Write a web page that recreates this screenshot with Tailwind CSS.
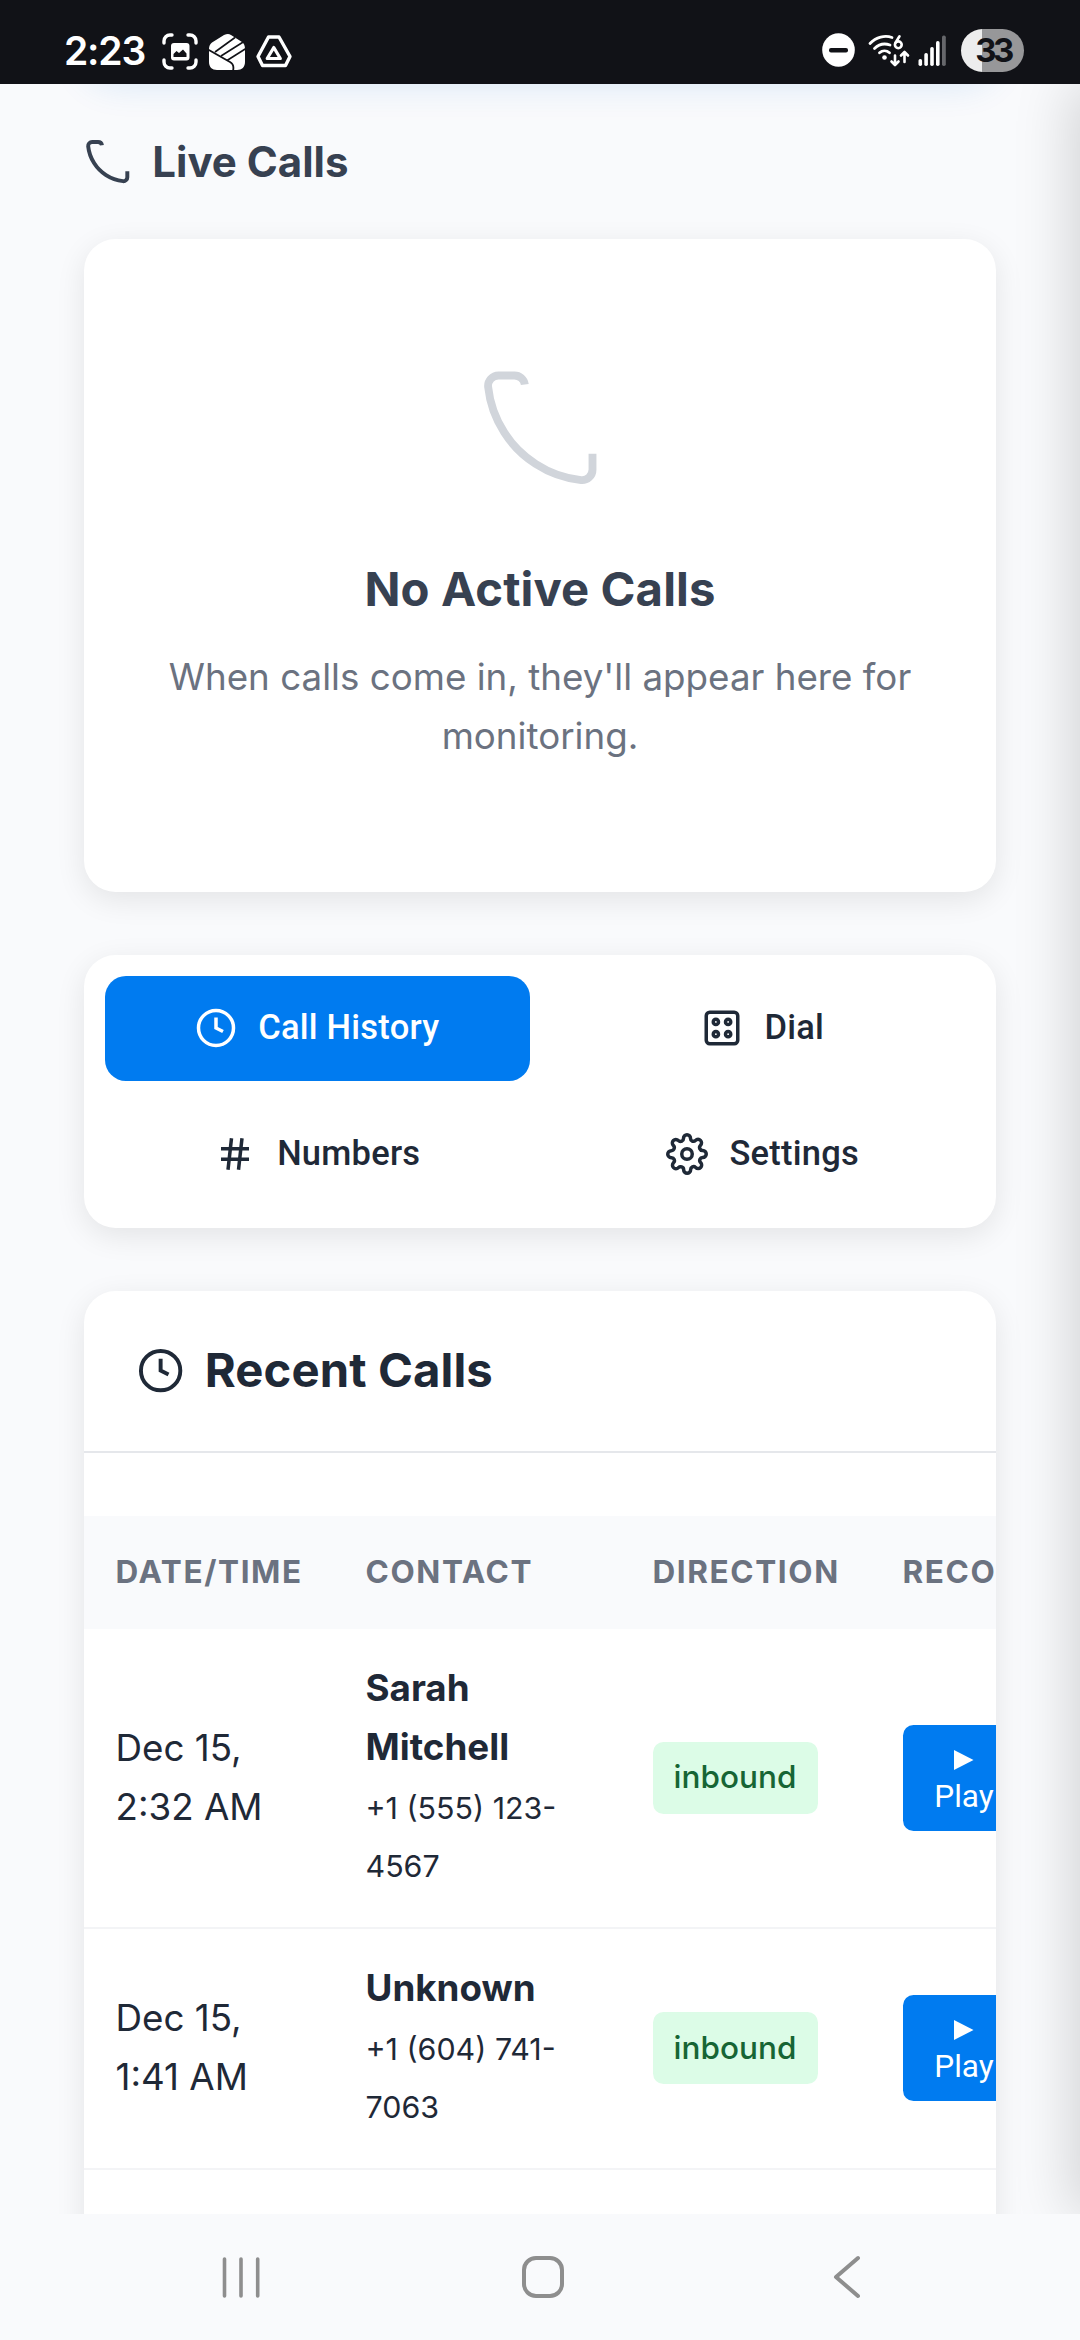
<!DOCTYPE html>
<html lang="en">
<head>
<meta charset="utf-8">
<meta name="viewport" content="width=device-width">
<title>Live Calls</title>
<script src="https://cdn.jsdelivr.net/npm/@tailwindcss/browser@4"></script>
</head>
<body class="bg-[#f9fafc] font-['Inter',sans-serif] text-[#1f2937] overflow-hidden">
<div class="flex h-[2340px] w-[1080px] flex-col overflow-hidden">

  <!-- Status bar -->
  <header class="relative z-10 flex h-[84px] shrink-0 items-center justify-between bg-[#111217] pt-[16px] pr-[56px] pl-[64px] text-white">
    <div class="flex items-center">
      <span class="w-[98px] text-[39px] leading-none font-semibold tracking-[-1.2px]">2:23</span>
      <svg class="mt-[3px] h-[37px] w-[36px]" viewBox="0 0 36 37" fill="none">
        <path d="M2 10V8a6 6 0 0 1 6-6h2M26 2h2a6 6 0 0 1 6 6v2M34 27v2a6 6 0 0 1-6 6h-2M10 35H8a6 6 0 0 1-6-6v-2" stroke="#fff" stroke-width="3.4" stroke-linecap="round"/>
        <rect x="9" y="10" width="18.5" height="17.5" rx="3" fill="#fff"/>
        <path d="M11.5 24v-3l3-3 2.500 2 4-3.500 3.500 4V24z" fill="#111217"/>
      </svg>
      <svg class="mt-[3px] ml-[10px] h-[38px] w-[38px]" viewBox="0 0 38 38">
        <path d="M1 16c0-3 1-5 3-6.500L16 2c3-1.500 5-1.500 7 0l11 7c2 1.500 3 3.500 3 7v13c0 5-3 8-8 8H9c-5 0-8-3-8-8z" fill="#fff"/>
        <path d="M0 16.500l22 12.500c4 2.200 4 5 3 9" fill="none" stroke="#111217" stroke-width="1.800"/>
        <path d="M38 15.500L19 27.500M7 19L27 4.500M13 23L36 8.500" fill="none" stroke="#111217" stroke-width="1.600"/>
      </svg>
      <svg class="mt-[2px] ml-[10px] h-[33px] w-[36px]" viewBox="0 0 36 33" fill="none" stroke="#fff" stroke-linejoin="round">
        <path d="M12.500 2h10.500L34 21.500 29.500 30.500h-23L2 21.500z" stroke-width="3.400"/>
        <path d="M17.800 12.500l6.500 11H11.200z" stroke-width="3.200"/>
      </svg>
    </div>
    <div class="flex items-center">
      <svg class="h-[34px] w-[33px]" viewBox="0 0 33 34"><ellipse cx="16.500" cy="17" rx="16.300" ry="16.700" fill="#fff"/><rect x="7" y="15" width="19" height="4.400" rx="2" fill="#111217"/></svg>
      <svg class="ml-[13px] h-[33px] w-[42px]" viewBox="0 0 42 33" fill="none" stroke="#fff" stroke-linecap="round">
        <path d="M2 9.500C8 3 17 1 24 3.500M6.500 14.500c4.500-4.500 10-5.500 15.500-3.500M11.500 18.800c3-2.600 7-2.600 10 0" stroke-width="2.800"/>
        <circle cx="16.500" cy="23.500" r="2.300" fill="#fff" stroke="none"/>
        <path d="M31.500 2.300l-4 6.500" stroke-width="2.600"/><circle cx="30.300" cy="10.800" r="3.400" stroke-width="2.600"/>
        <path d="M27 21.500v9M23.500 27.500l3.500 3.500 3.500-3.500M36.500 28v-9.500M33 21.500l3.500-3.500 3.500 3.500" stroke-width="2.600" stroke-linejoin="round"/>
      </svg>
      <svg class="ml-[8px] h-[31px] w-[29px]" viewBox="0 0 29 31" fill="#fff"><rect x="0.500" y="24" width="3.600" height="7" rx="1.700"/><rect x="6.300" y="18" width="3.600" height="13" rx="1.700"/><rect x="12.200" y="12" width="3.600" height="19" rx="1.700"/><rect x="18" y="6" width="3.600" height="25" rx="1.700"/><rect x="24" y="0.500" width="3.800" height="30.500" rx="1.700" fill="#66676b"/></svg>
      <div class="ml-[14px] flex h-[43px] w-[63px] items-center justify-center rounded-full bg-linear-to-r from-[#ededed] from-[33%] to-[#979799] to-[33%]">
        <span class="pl-[1px] text-[33px] leading-none font-bold tracking-[-3.5px] text-[#111217]">33</span>
      </div>
    </div>
  </header>

  <main class="relative flex h-[2130px] shrink-0 flex-col overflow-hidden px-[84px]">
    <!-- Shadow of the banner scrolled off above -->
    <div class="absolute bottom-full left-[84px] h-[100px] w-[912px] -translate-y-[8px] rounded-[31.5px] shadow-[0_8px_36px_rgba(0,110,210,0.14)]"></div>
    <!-- Shadow of the off-canvas drawer -->
    <div class="absolute top-0 left-full z-20 h-full w-[700px] shadow-[-10px_0_53px_rgba(0,0,0,0.15)]"></div>

    <h2 class="mt-[44px] flex h-[67px] shrink-0 items-center gap-[21px] text-[42px] font-bold text-[#374151]">
      <svg class="size-[47.25px]" viewBox="0 0 24 24" fill="none" stroke="currentColor" stroke-width="2"><path d="M22 16.920v3a2 2 0 0 1-2.180 2 19.790 19.790 0 0 1-8.630-3.070 19.500 19.500 0 0 1-6-6 19.790 19.790 0 0 1-3.070-8.670A2 2 0 0 1 4.110 2h3a2 2 0 0 1 2 1.720"/></svg>
      Live Calls
    </h2>

    <section class="mt-[43.5px] flex h-[653px] shrink-0 flex-col items-center rounded-[31.5px] bg-white px-[63px] pt-[126px] text-center shadow-[0_8px_30px_rgba(0,0,0,0.09)]">
      <svg class="size-[126px] text-[#d1d5db]" viewBox="0 0 24 24" fill="none" stroke="currentColor" stroke-width="1.500"><path d="M22 16.920v3a2 2 0 0 1-2.180 2 19.790 19.790 0 0 1-8.630-3.070 19.500 19.500 0 0 1-6-6 19.790 19.790 0 0 1-3.070-8.670A2 2 0 0 1 4.110 2h3a2 2 0 0 1 2 1.720"/></svg>
      <h3 class="mt-[60px] text-[47.25px] leading-[75.6px] font-bold tracking-[0.1px] text-[#374151]">No Active Calls</h3>
      <p class="mt-[22px] text-[36.75px] leading-[58.8px] text-[#6b7280]">When calls come in, they'll appear here for<br>monitoring.</p>
    </section>

    <nav class="mt-[63px] grid h-[273px] shrink-0 grid-cols-2 grid-rows-2 gap-[21px] rounded-[31.5px] bg-white p-[21px] font-['Roboto',sans-serif] text-[34.5px] font-medium tracking-[0.24px] shadow-[0_8px_30px_rgba(0,0,0,0.09)]">
      <a class="flex items-center justify-center gap-[21px] rounded-[21px] bg-[#007bf0] text-white">
        <svg class="size-[42px]" viewBox="0 0 24 24" fill="none" stroke="currentColor" stroke-width="2"><circle cx="12" cy="12" r="10"/><path d="M12 6v6l4 2"/></svg>
        Call History
      </a>
      <a class="flex items-center justify-center gap-[21px]">
        <svg class="size-[42px]" viewBox="0 0 24 24" fill="none" stroke="currentColor" stroke-width="2"><rect x="3" y="3" width="18" height="18" rx="2"/><circle cx="8.500" cy="8.500" r="1.500"/><circle cx="15.500" cy="8.500" r="1.500"/><circle cx="8.500" cy="15.500" r="1.500"/><circle cx="15.500" cy="15.500" r="1.500"/></svg>
        Dial
      </a>
      <a class="flex items-center justify-center gap-[21px]">
        <svg class="size-[42px]" viewBox="0 0 24 24" fill="none" stroke="currentColor" stroke-width="2"><path d="M4 9h16M4 15h16M10 3L8 21M16 3l-2 18"/></svg>
        Numbers
      </a>
      <a class="flex items-center justify-center gap-[21px]">
        <svg class="size-[42px]" viewBox="0 0 24 24" fill="none" stroke="currentColor" stroke-width="2"><circle cx="12" cy="12" r="3"/><path d="M19.400 15a1.650 1.650 0 0 0 .33 1.820l.06.06a2 2 0 0 1 0 2.830 2 2 0 0 1-2.830 0l-.06-.06a1.650 1.650 0 0 0-1.820-.33 1.650 1.650 0 0 0-1 1.510V21a2 2 0 0 1-2 2 2 2 0 0 1-2-2v-.09A1.650 1.650 0 0 0 9 19.400a1.650 1.650 0 0 0-1.820.33l-.06.06a2 2 0 0 1-2.830 0 2 2 0 0 1 0-2.830l.06-.06a1.650 1.650 0 0 0 .33-1.820 1.650 1.650 0 0 0-1.510-1H3a2 2 0 0 1-2-2 2 2 0 0 1 2-2h.09A1.650 1.650 0 0 0 4.600 9a1.650 1.650 0 0 0-.33-1.820l-.06-.06a2 2 0 0 1 0-2.830 2 2 0 0 1 2.830 0l.06.06a1.650 1.650 0 0 0 1.820.33H9a1.650 1.650 0 0 0 1-1.510V3a2 2 0 0 1 2-2 2 2 0 0 1 2 2v.09a1.650 1.650 0 0 0 1 1.510 1.650 1.650 0 0 0 1.820-.33l.06-.06a2 2 0 0 1 2.830 0 2 2 0 0 1 0 2.830l-.06.06a1.650 1.650 0 0 0-.33 1.820V9a1.650 1.650 0 0 0 1.510 1H21a2 2 0 0 1 2 2 2 2 0 0 1-2 2h-.09a1.650 1.650 0 0 0-1.510 1z"/></svg>
        Settings
      </a>
    </nav>

    <section class="mt-[63px] h-[1200px] shrink-0 overflow-hidden rounded-[31.5px] bg-white shadow-[0_8px_30px_rgba(0,0,0,0.09)]">
      <h2 class="mb-[63px] flex h-[162px] items-center gap-[21px] border-b-2 border-[#e5e7eb] px-[52.5px] text-[47.25px] font-bold tracking-[0.1px]">
        <svg class="size-[47.25px]" viewBox="0 0 24 24" fill="none" stroke="currentColor" stroke-width="2"><circle cx="12" cy="12" r="10"/><path d="M12 6v6l4 2"/></svg>
        Recent Calls
      </h2>
      <table class="w-[1110px] table-fixed border-collapse text-left text-[36.75px] leading-[58.8px]">
        <colgroup><col class="w-[250px]"><col class="w-[287px]"><col class="w-[250px]"><col></colgroup>
        <thead>
          <tr class="h-[113px] bg-[#f9fafc] text-[31.5px] tracking-[1.6px] text-[#6b7280]">
            <th class="px-[31.5px] py-0 font-bold">DATE/TIME</th><th class="px-[31.5px] py-0 font-bold">CONTACT</th><th class="px-[31.5px] py-0 font-bold">DIRECTION</th><th class="px-[31.5px] py-0 font-bold">RECORDING</th>
          </tr>
        </thead>
        <tbody>
          <tr class="h-[299px] border-b-2 border-[#f3f4f6]">
            <td class="px-[31.5px] py-0">Dec 15,<br>2:32 AM</td>
            <td class="px-[31.5px] py-0"><strong class="block font-bold">Sarah<br>Mitchell</strong><span class="block pt-[2px] text-[30.4px]">+1 (555) 123-<br>4567</span></td>
            <td class="px-[31.5px] py-0"><span class="flex h-[72px] w-[165px] items-center justify-center rounded-[10.5px] bg-[#dcfce7] text-[31.5px] font-medium text-[#166534]">inbound</span></td>
            <td class="px-[31.5px] py-0"><button class="flex h-[106px] w-[123px] flex-col items-center justify-center rounded-[10.5px] bg-[#007bf0] font-['Roboto',sans-serif] text-[31.5px] leading-[37px] text-white"><svg class="h-[37px] w-[20px]" viewBox="0 0 20 37"><path d="M0 9v20l19.500-10z" fill="currentColor"/></svg>Play</button></td>
          </tr>
          <tr class="h-[241px] border-b-2 border-[#f3f4f6]">
            <td class="px-[31.5px] py-0">Dec 15,<br>1:41 AM</td>
            <td class="px-[31.5px] py-0"><strong class="block font-bold">Unknown</strong><span class="block pt-[2px] text-[30.4px]">+1 (604) 741-<br>7063</span></td>
            <td class="px-[31.5px] py-0"><span class="flex h-[72px] w-[165px] items-center justify-center rounded-[10.5px] bg-[#dcfce7] text-[31.5px] font-medium text-[#166534]">inbound</span></td>
            <td class="px-[31.5px] py-0"><button class="flex h-[106px] w-[123px] flex-col items-center justify-center rounded-[10.5px] bg-[#007bf0] font-['Roboto',sans-serif] text-[31.5px] leading-[37px] text-white"><svg class="h-[37px] w-[20px]" viewBox="0 0 20 37"><path d="M0 9v20l19.500-10z" fill="currentColor"/></svg>Play</button></td>
          </tr>
        </tbody>
      </table>
    </section>
  </main>

  <!-- System navigation -->
  <footer class="relative z-10 flex h-[126px] shrink-0 items-center justify-between bg-[#f9fafc] pr-[218px] pl-[221px] text-[#8e8e8e]">
    <svg class="h-[44px] w-[40px]" viewBox="0 0 40 44" fill="none" stroke="currentColor" stroke-width="3.600" stroke-linecap="round"><path d="M3.500 4v37M20 4v37M36.700 4v37"/></svg>
    <svg class="mr-[7px] h-[44px] w-[44px]" viewBox="0 0 44 44" fill="none" stroke="currentColor" stroke-width="4"><rect x="3" y="3" width="38" height="38" rx="12"/></svg>
    <svg class="h-[44px] w-[30px]" viewBox="0 0 30 44" fill="none" stroke="currentColor" stroke-width="4" stroke-linecap="round" stroke-linejoin="round"><path d="M26 3L4 22l22 19"/></svg>
  </footer>
</div>
</body>
</html>
